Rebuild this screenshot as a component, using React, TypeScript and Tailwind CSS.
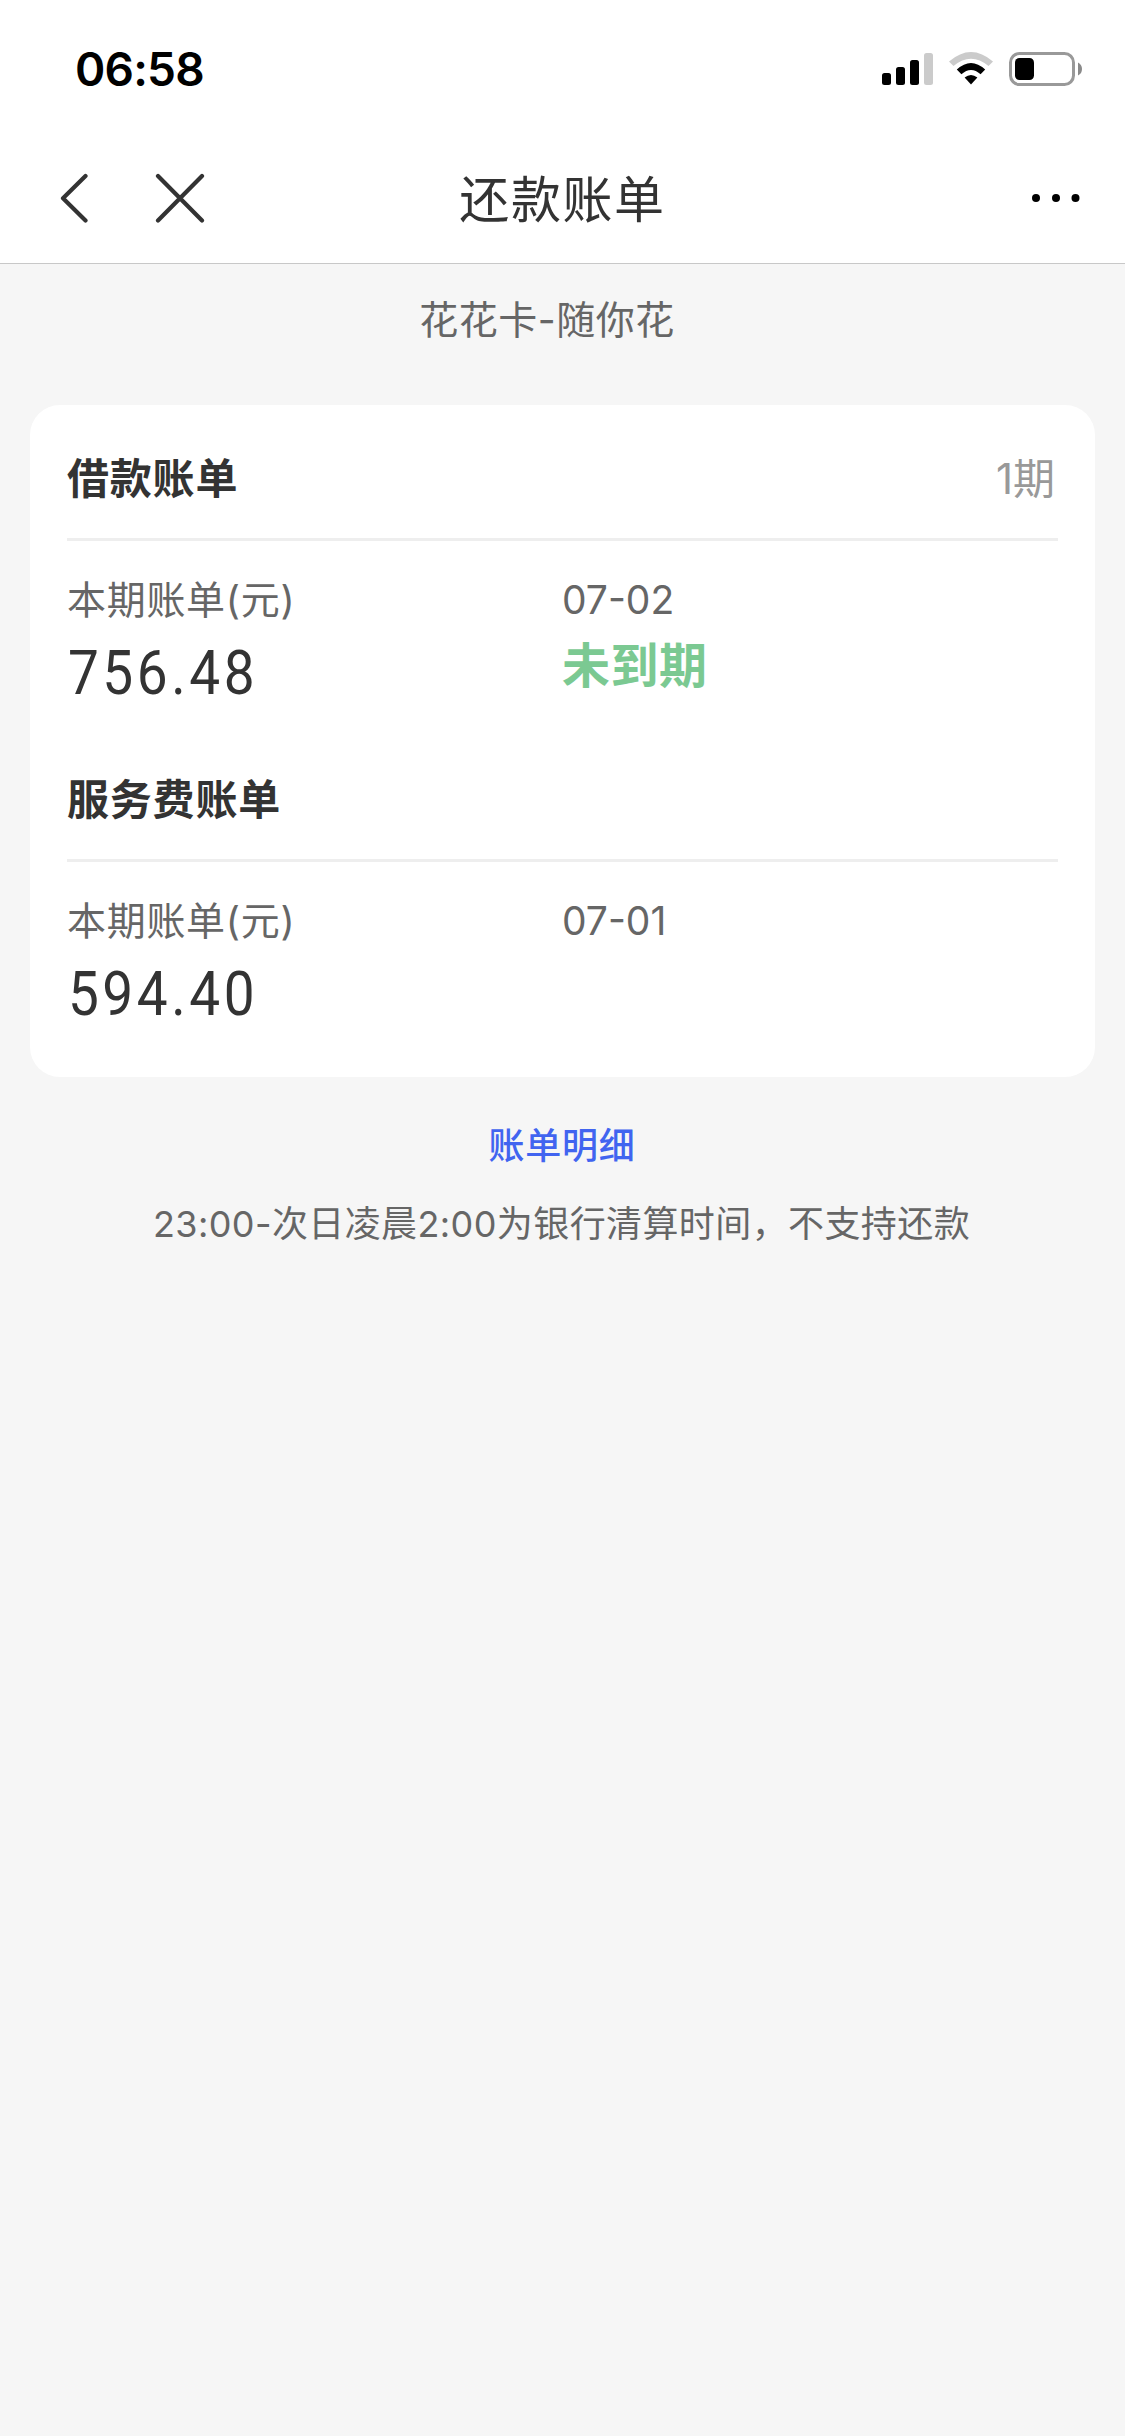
import React from 'react';

interface Bill {
  title: string;
  period?: string;
  amount: string;
  date: string;
  status?: string;
}

const bills: Bill[] = [
  { title: '借款账单', period: '1期', amount: '756.48', date: '07-02', status: '未到期' },
  { title: '服务费账单', amount: '594.40', date: '07-01' },
];

function StatusBar() {
  return (
    <div className="flex h-[132px] items-start justify-between pt-[49px] pr-[43px] pl-[75px]">
      <span className="text-[46px] leading-[40px] font-semibold tracking-[-0.8px] text-black">06:58</span>
      <div className="flex items-start gap-4 pt-[3px]">
        <svg width="51" height="34" viewBox="0 0 51 34">
          <rect x="0" y="21" width="9" height="12" rx="2.5" />
          <rect x="14" y="15" width="9" height="18" rx="2.5" />
          <rect x="28" y="8" width="9" height="25" rx="2.5" />
          <rect x="42" y="1" width="9" height="32" rx="2.5" fill="#cbcbcb" />
        </svg>
        <svg width="44" height="34" viewBox="0 0 44 34">
          <path d="M0 9.5Q22 -9.5 44 9.5L39.5 14Q22 -0.5 4.5 14Z" fill="#cbcbcb" />
          <path d="M7.8 17.6Q22 4.4 36.2 17.6L31.6 22.2Q22 13.6 12.4 22.2Z" />
          <path d="M15.6 25.6Q22 20.4 28.4 25.6L22 32.6Z" />
        </svg>
        <svg width="73" height="34" viewBox="0 0 73 34">
          <rect x="1.5" y="1.5" width="63" height="31" rx="9" fill="none" stroke="#999" strokeWidth="3" />
          <rect x="6" y="6" width="19" height="22" rx="4.5" />
          <path d="M69 10.5Q73 12.5 73 17Q73 21.5 69 23.5Z" fill="#8a8a8a" />
        </svg>
      </div>
    </div>
  );
}

function NavBar() {
  return (
    <div className="grid h-[132px] grid-cols-3 items-center border-b border-[#c8c8c8] px-[45px]">
      <div className="flex items-center gap-[67px] pl-[15px]">
        <svg width="28" height="50" viewBox="0 0 28 50" fill="none" stroke="#333" strokeWidth="4.2" strokeLinecap="round" strokeLinejoin="round">
          <path d="M25.5 3L3 25.3L25.5 47.5" />
        </svg>
        <svg width="50" height="50" viewBox="0 0 50 50" fill="none" stroke="#333" strokeWidth="4.2" strokeLinecap="round">
          <path d="M3 3L47 47.5M47 3L3 47.5" />
        </svg>
      </div>
      <h1 className="pt-[4px] text-center text-[50px] leading-[60px] tracking-[1.6px] whitespace-nowrap text-[#333]">还款账单</h1>
      <svg className="justify-self-end" width="52" height="10" viewBox="0 0 52 10">
        <circle cx="8" cy="5" r="4" />
        <circle cx="28" cy="5" r="4" />
        <circle cx="47.5" cy="5" r="4" />
      </svg>
    </div>
  );
}

function BillSection({ bill }: { bill: Bill }) {
  return (
    <section>
      <div className="flex h-[123px] items-center justify-between border-b-[3px] border-[#eee]">
        <h2 className="text-[42px] font-semibold tracking-[0.8px] text-[#333]">{bill.title}</h2>
        {bill.period && <span className="pr-[3px] text-[42px] text-[#999]">{bill.period}</span>}
      </div>
      <div className="grid grid-cols-[495px_1fr] pt-[34px]">
        <div>
          <div className="text-[39px] leading-[50px] tracking-[0.7px] text-[#666]">本期账单(元)</div>
          <div className="origin-left scale-x-[0.9] pt-px pl-px font-['Roboto'] text-[61px] leading-[95px] tracking-[4px] text-[#333]">
            {bill.amount}
          </div>
        </div>
        <div>
          <div className="text-[39px] leading-[50px] text-[#666]">{bill.date}</div>
          {bill.status && (
            <div className="text-[48px] leading-[82px] font-semibold tracking-[0.5px] text-[#7bc992]">{bill.status}</div>
          )}
        </div>
      </div>
    </section>
  );
}

export default function App() {
  return (
    <div className="h-[2436px] w-[1125px] overflow-hidden bg-[#f6f6f6] font-['Inter','Noto_Sans_CJK_SC',sans-serif]">
      <header className="bg-white">
        <StatusBar />
        <NavBar />
      </header>

      <p className="mt-[26px] pr-[31px] text-center text-[39px] leading-[60px] tracking-[0.5px] text-[#666]">花花卡-随你花</p>

      <main className="mx-[30px] mt-[55px] flex flex-col gap-[18px] rounded-[30px] bg-white px-[37px] pt-[13px] pb-[35px]">
        {bills.map((bill) => (
          <BillSection key={bill.title} bill={bill} />
        ))}
      </main>

      <a href="#" className="mt-[43px] block pr-px text-center text-[36px] leading-[53px] font-medium tracking-[0.8px] text-[#4164f0]">
        账单明细
      </a>
      <p className="mt-[21px] pr-[2px] text-center text-[36px] leading-[60px] tracking-[0.4px] text-[#666]">
        23:00-次日凌晨2:00为银行清算时间，不支持还款
      </p>
    </div>
  );
}
